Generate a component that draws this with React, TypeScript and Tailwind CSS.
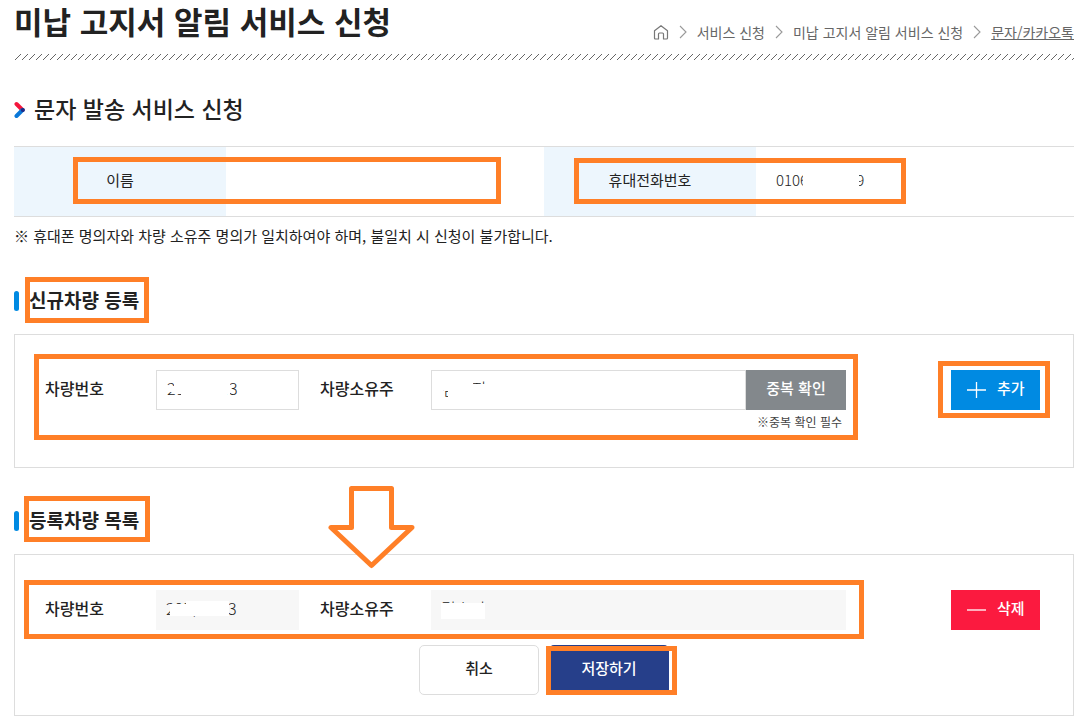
import type { ReactNode } from 'react';
import { useState } from 'react';

const breadcrumbs = [
  { label: '서비스 신청', current: false },
  { label: '미납 고지서 알림 서비스 신청', current: false },
  { label: '문자/카카오톡', current: true }
];

// Orange frame that points at a part of the form
const Highlight = ({ className }: { className: string }) => (
  <div className={`pointer-events-none absolute border-[5px] border-[#ff7f27] ${className}`} />
);

// Block that hides part of a personal value
const Mask = ({ className }: { className: string }) => (
  <div className={`pointer-events-none absolute bg-white ${className}`} />
);

const HomeIcon = () => (
  <svg width="16" height="16" viewBox="0 0 16 16" fill="none" stroke="#777" strokeWidth="1.2">
    <path d="M1.5 6.7 8 1.700l6.500 5V14q0 1-1 1h-3V10q0-1-1-1h-3q-1 0-1 1v5h-3q-1 0-1-1z" strokeLinejoin="round" />
  </svg>
);

const ChevronIcon = () => (
  <svg width="8" height="14" viewBox="0 0 8 14" fill="none" stroke="#999" strokeWidth="1.1">
    <path d="M1 1l6 6-6 6" />
  </svg>
);

const HatchLine = () => (
  <svg className="block h-[6px] w-full" aria-hidden="true">
    <defs>
      <pattern id="hatch" width="7" height="6" patternUnits="userSpaceOnUse">
        <path d="M1 6 7 0" stroke="#555" strokeWidth="0.9" />
      </pattern>
    </defs>
    <rect width="100%" height="6" fill="url(#hatch)" />
  </svg>
);

const SectionTitle = ({ children, frame }: { children: ReactNode; frame: string }) => (
  <div className="relative flex h-5 w-fit gap-[10px]">
    <span className="h-5 w-[5px] rounded-full bg-[#008ae2]" />
    <h3 className="text-[19px] leading-[18px] font-bold">{children}</h3>
    <Highlight className={frame} />
  </div>
);

export default function App() {
  const [carNumber, setCarNumber] = useState('20가 0003');
  const [owner, setOwner] = useState('김수진');

  return (
    <div lang="ko" className="bg-white pr-[13px] pb-3 pl-[14px] font-['Noto_Sans_CJK_KR',sans-serif] text-[#222]">
      {/* Page header */}
      <header className="flex h-[54px] justify-between">
        <h1 className="text-[31px] leading-[42px] font-bold">미납 고지서 알림 서비스 신청</h1>
        <nav className="mb-3 flex h-5 items-center gap-[10px] self-end text-sm leading-5 text-[#666]">
          <a href="#" aria-label="홈">
            <HomeIcon />
          </a>
          {breadcrumbs.map((item) => (
            <div key={item.label} className="flex items-center gap-[10px]">
              <ChevronIcon />
              <a href="#" className={item.current ? 'underline' : ''}>{item.label}</a>
            </div>
          ))}
        </nav>
      </header>
      <HatchLine />

      <main>
        <div className="mt-8 flex items-center gap-2">
          <svg width="12" height="18" viewBox="0 0 12 18" fill="none" strokeWidth="4" strokeLinecap="round">
            <path d="M2.500 3 8.500 9" stroke="#f4163c" />
            <path d="M8.500 9 2.500 15" stroke="#0a78d8" />
            <path d="M8.800 9h.1" stroke="#1e2a86" />
          </svg>
          <h2 className="pb-1 text-[23px] leading-8 font-medium">문자 발송 서비스 신청</h2>
        </div>

        {/* Applicant info */}
        <div className="relative mt-[18px]">
          <table className="w-full table-fixed border-y border-[#ddd] text-[15px] leading-6">
            <tbody>
              <tr className="h-[70px]">
                <th scope="row" className="w-1/5 bg-[#edf6fd] pb-1 font-normal">이름</th>
                <td className="w-[30%]" />
                <th scope="row" className="w-1/5 bg-[#edf6fd] pb-1 font-normal">휴대전화번호</th>
                <td className="w-[30%] pb-1 pl-5">
                  <div className="relative w-fit font-light">
                    01060000009
                    <Mask className="inset-y-0 left-[27px] w-[56px]" />
                  </div>
                </td>
              </tr>
            </tbody>
          </table>
          <Highlight className="top-[11px] left-[59px] h-[47px] w-[428px]" />
          <Highlight className="top-[12px] left-[560px] h-[46px] w-[332px]" />
        </div>
        <p className="mt-2 text-[15px] leading-[22px]">
          ※ 휴대폰 명의자와 차량 소유주 명의가 일치하여야 하며, 불일치 시 신청이 불가합니다.
        </p>

        {/* New vehicle */}
        <section className="mt-11">
          <SectionTitle frame="-top-[14px] left-[11px] h-[46px] w-[124px]">신규차량 등록</SectionTitle>
          <div className="mt-[23px] flex items-start border border-[#ddd] pt-[35px] pr-[33px] pb-[33px] pl-[30px]">
            <div className="relative flex-1">
              <div className="flex items-center">
                <label htmlFor="carNumber" className="w-[111px] pb-1 text-base leading-9 font-medium">차량번호</label>
                <div className="relative w-[143px]">
                  <input
                    id="carNumber"
                    value={carNumber}
                    onChange={(e) => setCarNumber(e.target.value)}
                    className="block h-10 w-full border border-[#ddd] px-[10px] pb-1 text-base font-light outline-none"
                  />
                  <Mask className="top-[8px] left-[18px] h-[16px] w-[56px]" />
                  <Mask className="top-[8px] left-[25px] h-[24px] w-[46px]" />
                  <Mask className="top-[16px] left-[10px] h-[6px] w-[12px]" />
                </div>
                <label htmlFor="owner" className="ml-[21px] w-[111px] pb-1 text-base leading-9 font-medium">차량소유주</label>
                <div className="relative flex-1">
                  <input
                    id="owner"
                    value={owner}
                    onChange={(e) => setOwner(e.target.value)}
                    className="block h-10 w-full border border-[#ddd] px-[10px] pb-1 text-base font-light outline-none"
                  />
                  <Mask className="top-[8px] left-[8px] h-[12px] w-[34px]" />
                  <Mask className="top-[14px] left-[17px] h-[20px] w-[44px]" />
                </div>
                <button type="button" className="h-10 w-[100px] bg-[#83888c] pb-1 text-[15px] font-medium text-white">
                  중복 확인
                </button>
              </div>
              <p className="pr-1 text-right text-xs leading-6 text-[#444]">※중복 확인 필수</p>
              <Highlight className="-top-[16px] -right-[12px] -bottom-[6px] -left-[11px]" />
            </div>
            <div className="relative ml-[105px]">
              <button
                type="button"
                className="flex h-10 w-[89px] items-center gap-[10px] bg-[#008ae2] pl-4 text-[15px] leading-9 font-medium text-white"
              >
                <svg width="20" height="20" viewBox="0 0 20 20" stroke="#fff" strokeWidth="1.300">
                  <path d="M0 10h19M9.500 2v16" />
                </svg>
                <span className="pb-1">추가</span>
              </button>
              <Highlight className="-top-[9px] -right-[10px] -bottom-[8px] -left-[13px]" />
            </div>
          </div>
        </section>

        {/* Registered vehicles */}
        <section className="relative mt-[43px]">
          <SectionTitle frame="-top-[15px] left-[10px] h-[46px] w-[126px]">등록차량 목록</SectionTitle>
          <div className="mt-[23px] border border-[#ddd] pt-[35px] pb-5">
            <div className="flex items-start pr-[33px] pl-[30px]">
              <div className="relative flex flex-1 items-center">
                <label htmlFor="savedCarNumber" className="w-[111px] pb-1 text-base leading-9 font-medium">차량번호</label>
                <div className="relative w-[143px]">
                  <input
                    id="savedCarNumber"
                    readOnly
                    value="20가 0003"
                    className="block h-10 w-full bg-[#f7f7f7] px-[10px] pb-1 text-base font-light outline-none"
                  />
                  <Mask className="top-[14px] left-[14px] h-[12px] w-[59px]" />
                  <Mask className="top-[11px] left-[30px] h-[14px] w-[43px]" />
                </div>
                <label htmlFor="savedOwner" className="ml-[21px] w-[111px] pb-1 text-base leading-9 font-medium">차량소유주</label>
                <div className="relative flex-1">
                  <input
                    id="savedOwner"
                    readOnly
                    value="김수진"
                    className="block h-10 w-full bg-[#f7f7f7] px-[10px] pb-1 text-base font-light outline-none"
                  />
                  <Mask className="top-[13px] left-[10px] h-[16px] w-[44px]" />
                </div>
                <Highlight className="-top-[10px] -right-[18px] -bottom-[9px] -left-[21px]" />
              </div>
              <button
                type="button"
                className="ml-[105px] flex h-10 w-[89px] items-center gap-[10px] bg-[#fb1a3f] pl-4 text-[15px] leading-9 font-medium text-white"
              >
                <svg width="20" height="20" viewBox="0 0 20 20" stroke="#fff" strokeWidth="1.300">
                  <path d="M0 10h19" />
                </svg>
                <span className="pb-1">삭제</span>
              </button>
            </div>

            <div className="mt-[15px] flex justify-center gap-[10px] text-[15px] font-medium">
              <button type="button" className="h-[50px] w-[120px] rounded-[5px] border border-[#ddd] bg-white pb-1">
                취소
              </button>
              <div className="relative">
                <button type="button" className="h-[50px] w-[120px] rounded-[5px] bg-[#263f8a] pb-1 text-white">
                  저장하기
                </button>
                <Highlight className="top-[1px] -right-[8px] bottom-0 -left-[3px]" />
              </div>
            </div>
          </div>

          <svg
            className="pointer-events-none absolute -top-[25px] left-[314px]"
            width="87"
            height="83"
            viewBox="0 0 87 83"
            fill="#fff"
            stroke="#ff7f27"
            strokeWidth="5"
            strokeLinejoin="round"
          >
            <path d="M23.500 2.500H63.500V41.500H84L43.500 79.500 3 41.500H23.500z" />
          </svg>
        </section>
      </main>
    </div>
  );
}
